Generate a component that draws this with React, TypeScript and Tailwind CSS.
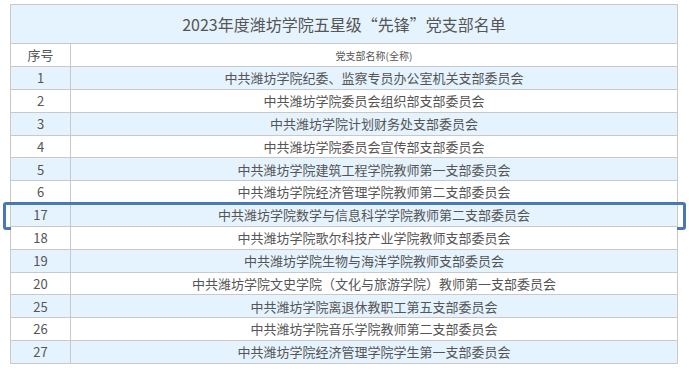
const rows: [string, string][] = [
  ['1', '中共潍坊学院纪委、监察专员办公室机关支部委员会'],
  ['2', '中共潍坊学院委员会组织部支部委员会'],
  ['3', '中共潍坊学院计划财务处支部委员会'],
  ['4', '中共潍坊学院委员会宣传部支部委员会'],
  ['5', '中共潍坊学院建筑工程学院教师第一支部委员会'],
  ['6', '中共潍坊学院经济管理学院教师第二支部委员会'],
  ['17', '中共潍坊学院数学与信息科学学院教师第二支部委员会'],
  ['18', '中共潍坊学院歌尔科技产业学院教师支部委员会'],
  ['19', '中共潍坊学院生物与海洋学院教师支部委员会'],
  ['20', '中共潍坊学院文史学院（文化与旅游学院）教师第一支部委员会'],
  ['25', '中共潍坊学院离退休教职工第五支部委员会'],
  ['26', '中共潍坊学院音乐学院教师第二支部委员会'],
  ['27', '中共潍坊学院经济管理学院学生第一支部委员会'],
];

export default function App() {
  return (
    <div
      className="w-[689px] h-[369px] bg-white pl-[10px] pt-[4px] text-[#555]"
      style={{ fontFamily: '"Noto Sans CJK SC", "Noto Sans", sans-serif' }}
    >
      <div className="w-[668px] border border-[#c9c9c9] border-b-0">
        {/* Title */}
        <div className="h-[39px] flex items-center justify-center bg-[#e5f3fe] border-b border-[#c9c9c9] text-[16px]">
          2023年度潍坊学院五星级“先锋”党支部名单
        </div>

        {/* Header */}
        <div className="h-[23px] flex bg-white border-b border-[#c9c9c9]">
          <div className="w-[60px] shrink-0 flex items-center justify-center border-r border-[#c9c9c9] text-[13px]">
            序号
          </div>
          <div className="flex-1 flex items-center justify-center text-[10px]">
            党支部名称(全称)
          </div>
        </div>

        {rows.map(([no, name], i) => (
          <div
            key={no}
            className={`relative h-[22.85px] flex border-b border-[#c9c9c9] text-[13px] ${
              i % 2 === 0 ? 'bg-[#e5f3fe]' : 'bg-white'
            }`}
          >
            <div className="w-[60px] shrink-0 flex items-center justify-center border-r border-[#c9c9c9]">
              {no}
            </div>
            <div className="flex-1 flex items-center justify-center whitespace-nowrap">{name}</div>
            {no === '17' && (
              <span className="absolute -left-[8px] -right-[9px] -top-[2px] -bottom-[4px] border-[3px] border-[#4a78b4] rounded-[3px] pointer-events-none" />
            )}
          </div>
        ))}
      </div>
    </div>
  );
}
